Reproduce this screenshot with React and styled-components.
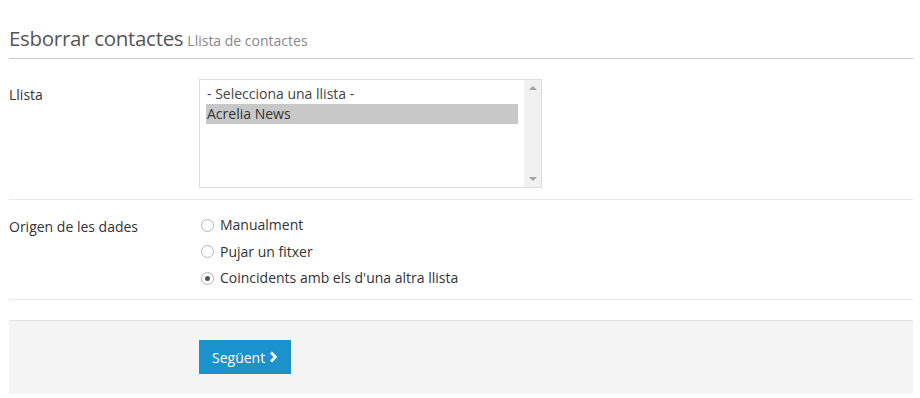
import React from "react";
import styled, { createGlobalStyle } from "styled-components";

const GlobalStyle = createGlobalStyle`
  body {
    margin: 0;
    background: #fff;
    font-family: "Open Sans", "Liberation Sans", sans-serif;
    color: #333;
  }
`;

const Page = styled.div`
  width: 904px;
  padding: 0 7px 0 9px;
`;

const Header = styled.div`
  padding-top: 25px;
  padding-bottom: 6px;
  border-bottom: 1px solid #c8c8c8;
  display: flex;
  align-items: baseline;
  gap: 4px;
`;

const Title = styled.h1`
  margin: 0;
  font-size: 20.5px;
  font-weight: 400;
  color: #555;
  letter-spacing: -0.3px;
  line-height: 27px;
`;

const Subtitle = styled.span`
  font-size: 14px;
  color: #888;
`;

const Row = styled.div`
  display: grid;
  grid-template-columns: 190px 1fr;
  padding: ${(p) => p.$pad};
  border-bottom: 1px solid #e8e8e8;
`;

const Label = styled.div`
  font-size: 14px;
  color: #333;
  line-height: 20px;
  padding-top: ${(p) => p.$top || 0}px;
`;

const ListBox = styled.div`
  width: 341px;
  height: 107px;
  border: 1px solid #ddd;
  display: flex;
  background: #fff;
`;

const Options = styled.div`
  flex: 1;
  padding: 4px 6px 0 6px;
`;

const Option = styled.div`
  font-size: 14px;
  line-height: 20px;
  height: 20px;
  padding-left: 1px;
  color: ${(p) => (p.$selected ? "#333" : "#444")};
  background: ${(p) => (p.$selected ? "#c8c8c8" : "transparent")};
`;

const ScrollTrack = styled.div`
  width: 17px;
  background: #f1f1f1;
  display: flex;
  flex-direction: column;
  justify-content: space-between;
  align-items: center;
  padding: 6px 0;
`;

const Arrow = styled.span`
  width: 0;
  height: 0;
  border-left: 4px solid transparent;
  border-right: 4px solid transparent;
  ${(p) =>
    p.$up
      ? "border-bottom: 4px solid #a3a3a3;"
      : "border-top: 4px solid #a3a3a3;"}
`;

const RadioList = styled.div`
  display: flex;
  flex-direction: column;
  gap: 6.5px;
`;

const RadioItem = styled.label`
  display: flex;
  align-items: center;
  gap: 6px;
  font-size: 14px;
  line-height: 20px;
  color: #333;
  padding-left: 2px;
`;

const RadioCircle = styled.span`
  width: 11px;
  height: 11px;
  border-radius: 50%;
  border: 1px solid #b5b5b5;
  background: #fff;
  display: flex;
  align-items: center;
  justify-content: center;

  &::after {
    content: "";
    width: 5px;
    height: 5px;
    border-radius: 50%;
    background: ${(p) => (p.$checked ? "#555" : "transparent")};
  }
`;

const Footer = styled.div`
  margin-top: 20px;
  background: #f4f4f4;
  border-top: 1px solid #e2e2e2;
  padding: 19px 0 20px 190px;
`;

const Button = styled.button`
  height: 34px;
  padding: 0 13px 0 13px;
  border: none;
  background: #1b92cc;
  color: #fff;
  font-family: "Open Sans", "Liberation Sans", sans-serif;
  font-size: 14px;
  display: flex;
  align-items: center;
  gap: 4px;
`;

const Chevron = () => (
  <svg width="9" height="12" viewBox="0 0 9 12">
    <path d="M2 1.5 L6.5 6 L2 10.5" fill="none" stroke="#fff" strokeWidth="2.6" />
  </svg>
);

const options = ["Manualment", "Pujar un fitxer", "Coincidents amb els d'una altra llista"];

const App = () => {
  return (
    <Page>
      <GlobalStyle />
      <Header>
        <Title>Esborrar contactes</Title>
        <Subtitle>Llista de contactes</Subtitle>
      </Header>
      <Row $pad="20px 0 11px">
        <Label $top={6}>Llista</Label>
        <ListBox>
          <Options>
            <Option>- Selecciona una llista -</Option>
            <Option $selected>Acrelia News</Option>
          </Options>
          <ScrollTrack>
            <Arrow $up />
            <Arrow />
          </ScrollTrack>
        </ListBox>
      </Row>
      <Row $pad="15px 0 11px">
        <Label $top={2}>Origen de les dades</Label>
        <RadioList>
          {options.map((o, i) => (
            <RadioItem key={o}>
              <RadioCircle $checked={i === 2} />
              {o}
            </RadioItem>
          ))}
        </RadioList>
      </Row>
      <Footer>
        <Button>
          Següent <Chevron />
        </Button>
      </Footer>
    </Page>
  );
};

export default App;
